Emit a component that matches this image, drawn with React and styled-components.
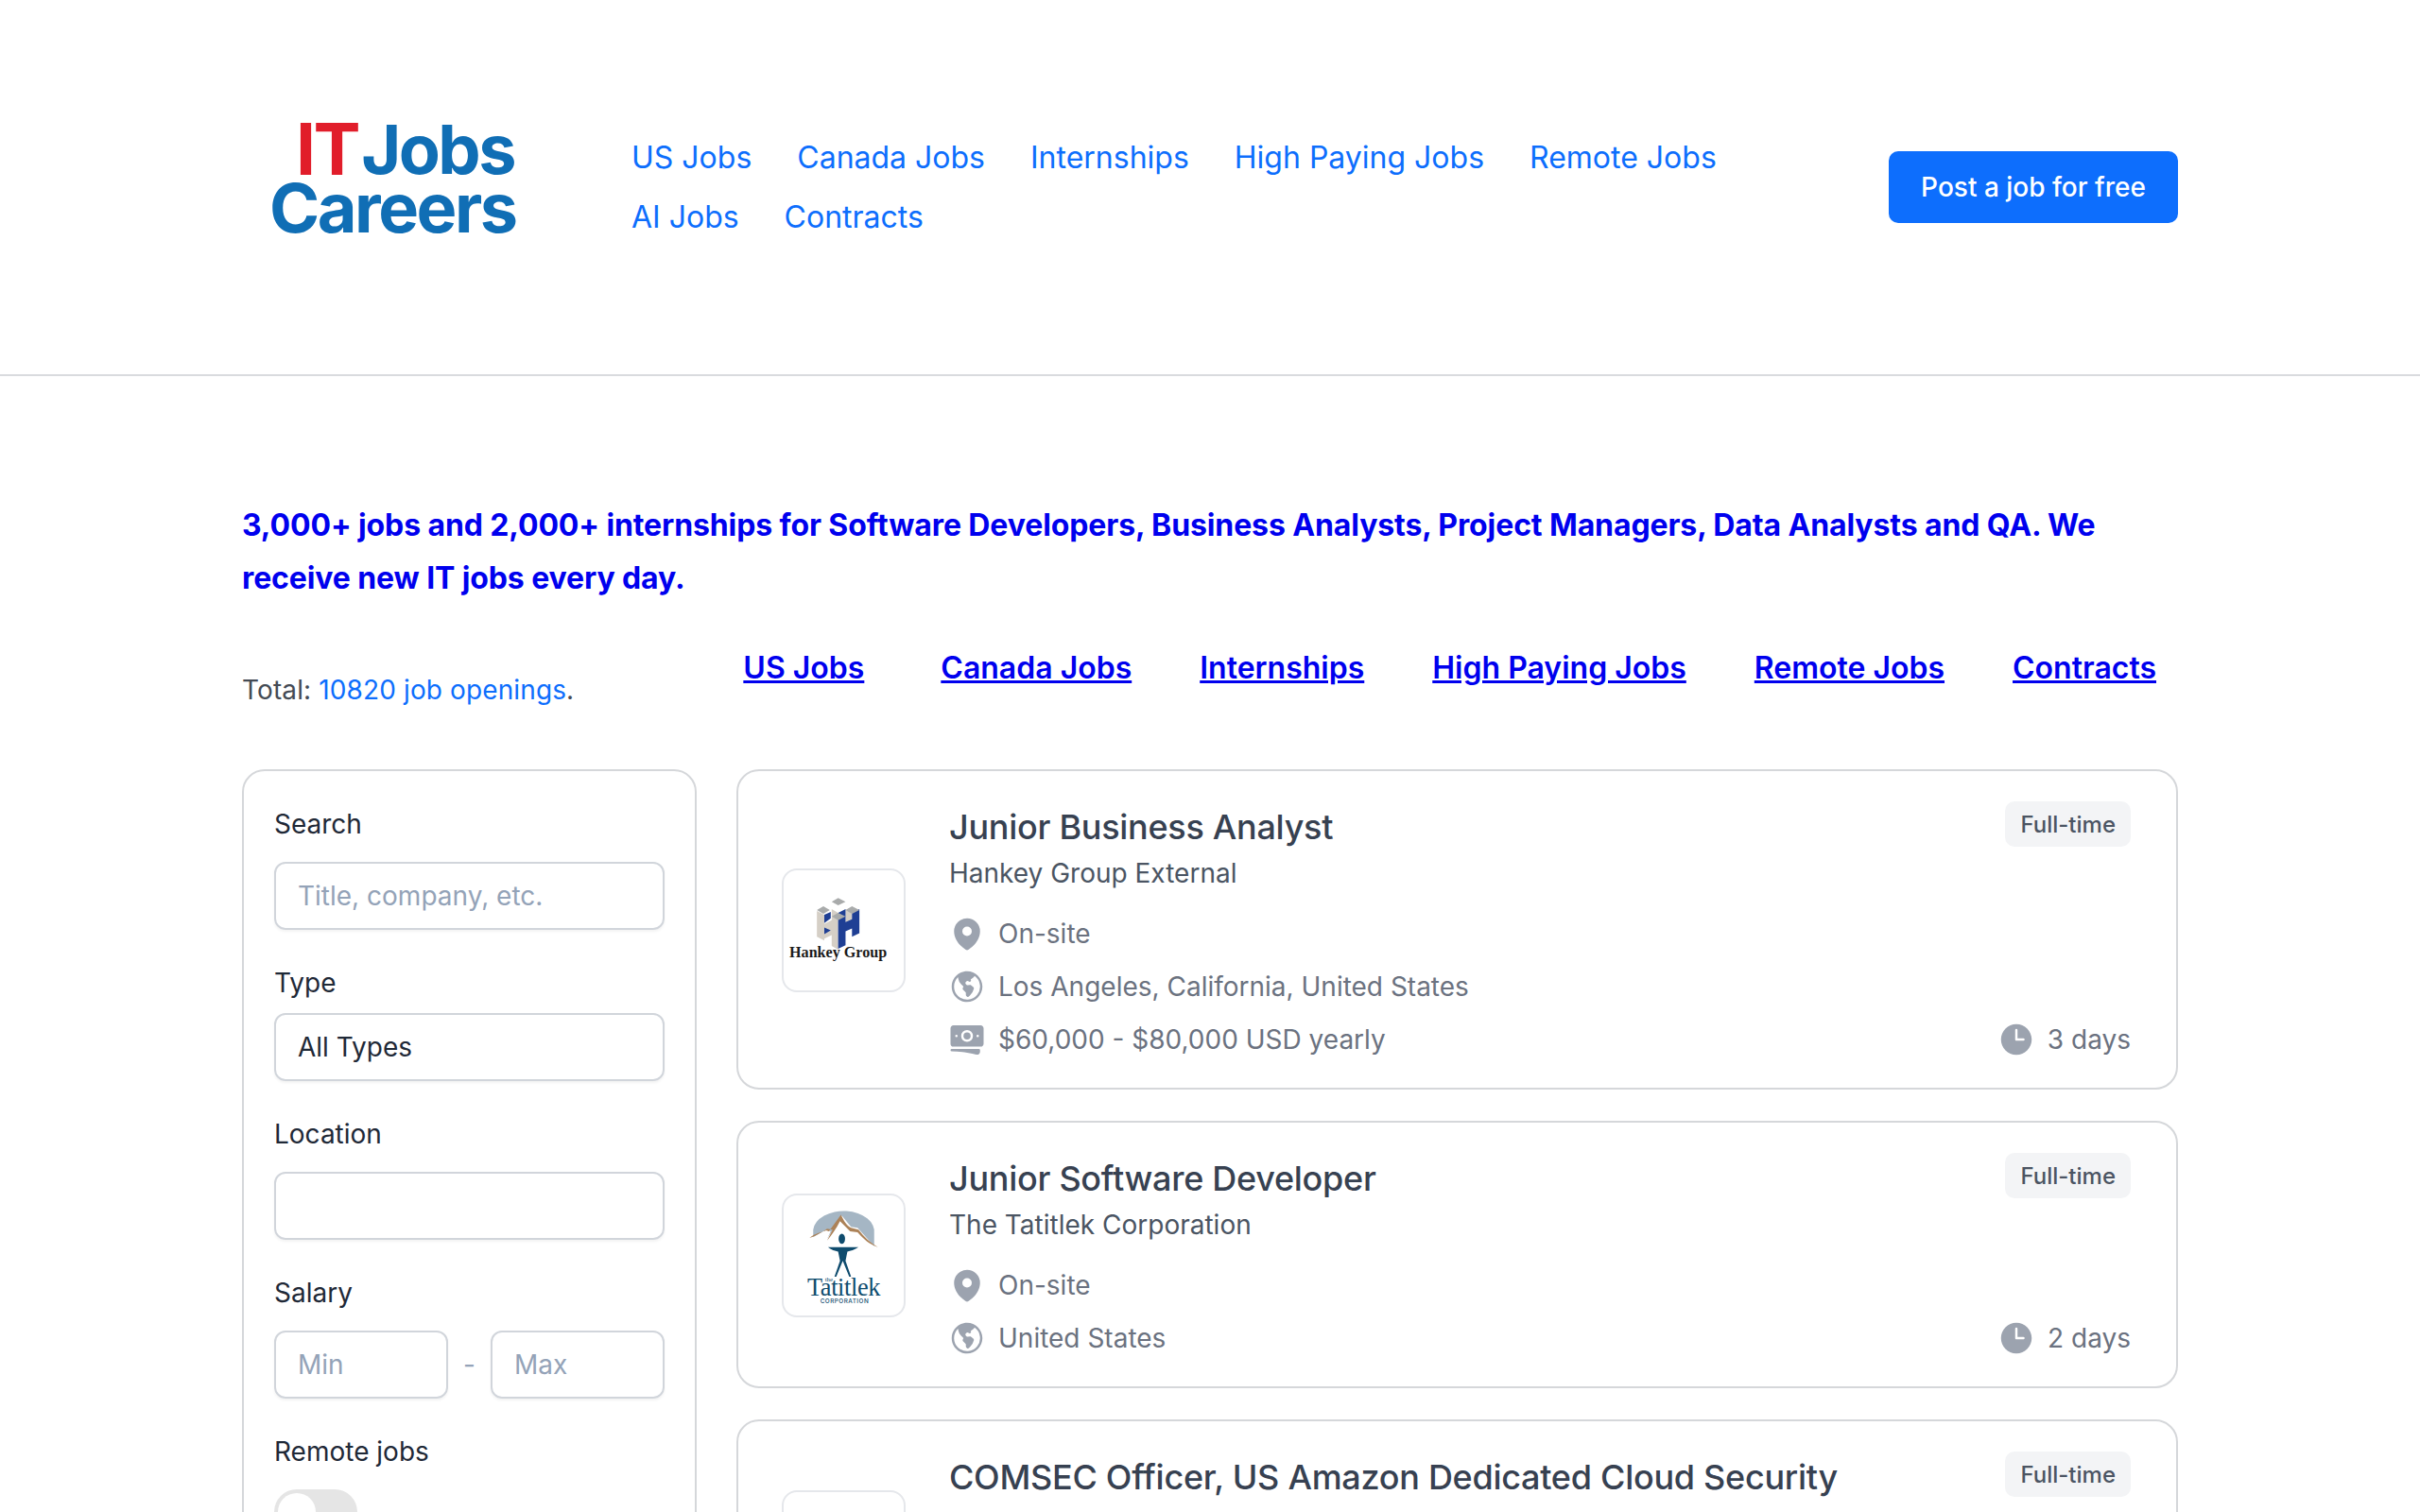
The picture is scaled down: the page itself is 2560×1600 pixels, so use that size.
import React from "react";
import styled, { createGlobalStyle } from "styled-components";

const Global = createGlobalStyle`
  html, body { margin: 0; padding: 0; background: #fff; height: 1600px; overflow: hidden; }
  * { box-sizing: border-box; }
  body { font-family: Inter, "Liberation Sans", sans-serif; color: #111827; }
`;
const Header = styled.header`
  height: 398px; border-bottom: 2px solid #d9dbde; padding: 0 256px;
  display: flex; align-items: center;
`;
const LogoBox = styled.div`
  width: 412px; flex: none; padding: 0 0 19px 29px; font-weight: 700;
  letter-spacing: -2.5px; line-height: 62px; font-size: 72px; color: #106eb5;
`;
const LogoLine = styled.div`
  display: flex; padding-left: ${(p) => p.$indent || 0}px; gap: 3px;
`;
const LogoRed = styled.span` color: #e11d2a; font-size: 75px; `;
const Nav = styled.nav`
  flex: 1; display: flex; flex-wrap: wrap; column-gap: 48px; row-gap: 15px; max-width: 1300px;
`;
const NavLink = styled.a`
  color: #0d6efd; font-size: 32px; line-height: 48px; text-decoration: none;
`;
const PostButton = styled.a`
  flex: none; margin-left: auto; background: #0d6efd; color: #fff; font-size: 28px; font-weight: 500;
  height: 76px; width: 306px; border-radius: 10px; display: flex; align-items: center; justify-content: center;
`;
const Main = styled.main` padding: 0 256px; `;
const Intro = styled.p`
  margin: 130px 0 0; color: #0000ee; font-weight: 700; font-size: 32px; line-height: 56px; letter-spacing: -0.11px;
`;
const Summary = styled.div`
  display: flex; justify-content: space-between; margin-top: 40px; height: 134px;
`;
const Total = styled.div` font-size: 28px; line-height: 42px; color: #444b55; padding-top: 29px; letter-spacing: .12px; `;
const TotalLink = styled.a` color: #0d6efd; `;
const QuickLinks = styled.div`
  display: flex; gap: 72px; padding: 3px 23px 0 0; white-space: nowrap; align-items: flex-start;
`;
const QuickLink = styled.a`
  color: #0000ee; font-weight: 600; font-size: 32px; line-height: 48px; text-decoration: underline;
  margin-right: ${(p) => (p.$wide ? 9 : 0)}px;
`;
const Columns = styled.div` display: flex; gap: 42px; align-items: flex-start; `;
const Sidebar = styled.aside`
  width: 481px; flex: none; border: 2px solid #d5d7da; border-radius: 24px; padding: 36px 32px; height: 1000px;
`;
const Label = styled.div` font-size: 28px; line-height: 40px; color: #1f2937; margin-top: ${(p) => p.$top || 0}px; `;
const Field = styled.div`
  height: 72px; border: 2px solid #d1d5db; border-radius: 12px; margin-top: ${(p) => p.$gap || 21}px; padding: 0 23px;
  display: flex; align-items: center; font-size: 28px; color: ${(p) => (p.$value ? "#1f2937" : "#94a3b8")};
  box-shadow: 0 2px 3px rgba(0,0,0,.05); flex: ${(p) => (p.$half ? "1" : "none")};
`;
const Range = styled.div` display: flex; align-items: center; gap: 16px; `;
const Dash = styled.span` color: #94a3b8; font-size: 28px; margin-top: 20px; `;
const Toggle = styled.div`
  width: 88px; height: 48px; border-radius: 24px; background: #e5e5e5; margin-top: 20px; padding: 4px;
`;
const Knob = styled.div` width: 40px; height: 40px; border-radius: 50%; background: #fff; `;
const Results = styled.div` flex: 1; display: flex; flex-direction: column; gap: 33px; `;
const Card = styled.article`
  border: 2px solid #d5d7da; border-radius: 24px; display: flex; padding: 32px 48px 30px 46px;
`;
const LogoTile = styled.div`
  width: 131px; height: 131px; flex: none; align-self: ${(p) => (p.$top ? "flex-start" : "center")};
  margin-top: ${(p) => p.$mt || 0}px; border: 2px solid #e5e7eb; border-radius: 16px; overflow: hidden; background: #fff;
`;
const Body = styled.div` flex: 1; margin-left: 46px; min-width: 0; display: flex; flex-direction: column; `;
const TitleRow = styled.div` display: flex; justify-content: space-between; align-items: flex-start; `;
const Title = styled.h2`
  margin: 3px 0 0; font-size: 36px; font-weight: 450; line-height: 48px; color: #374151; letter-spacing: -.28px;
`;
const Badge = styled.span`
  background: #f3f4f6; color: #4b5563; font-size: 24px; font-weight: 500; border-radius: 10px; height: 48px;
  padding: 0 16px; display: flex; align-items: center;
`;
const Company = styled.div` font-size: 28px; line-height: 42px; color: #4b5563; margin-top: 4px; `;
const Meta = styled.div` display: flex; flex-direction: column; gap: 14px; margin-top: 22px; `;
const MetaRow = styled.div` display: flex; align-items: center; justify-content: space-between; height: 42px; `;
const MetaItem = styled.div` display: flex; align-items: center; gap: 16px; font-size: 28px; color: #6b7280; `;
const IconSvg = styled.svg` width: 40px; height: 40px; margin: -2px -3px -2px -1px; color: #9ca3af; flex: none; `;

const Icon = ({ children }) => <IconSvg viewBox="0 0 24 24" fill="currentColor">{children}</IconSvg>;
const PinIcon = () => (
  <Icon><path fillRule="evenodd" clipRule="evenodd" d="M11.54 22.351l.07.04.028.016a.76.76 0 00.723 0l.028-.015.071-.041a16.975 16.975 0 001.144-.742 19.58 19.58 0 002.683-2.282c1.944-1.99 3.963-4.98 3.963-8.827a8.25 8.25 0 00-16.5 0c0 3.846 2.02 6.837 3.963 8.827a19.58 19.58 0 002.682 2.282 16.975 16.975 0 001.145.742zM12 13.5a3 3 0 100-6 3 3 0 000 6z"/></Icon>
);
const GlobeIcon = () => (
  <Icon><path fillRule="evenodd" clipRule="evenodd" d="M12 2.25c-5.385 0-9.75 4.365-9.75 9.75s4.365 9.75 9.75 9.75 9.75-4.365 9.75-9.75S17.385 2.25 12 2.25zM6.262 6.072a8.25 8.25 0 1010.562-.766 4.5 4.5 0 01-1.318 1.357L14.25 7.5l.165.33a.809.809 0 01-1.086 1.085l-.604-.302a1.125 1.125 0 00-1.298.21l-.132.131c-.439.44-.439 1.152 0 1.591l.296.296c.256.257.622.374.98.314l1.17-.195c.323-.054.654.036.905.245l1.33 1.108c.32.267.46.694.358 1.1a8.7 8.7 0 01-2.288 4.04l-.723.724a1.125 1.125 0 01-1.298.21l-.153-.076a1.125 1.125 0 01-.622-1.006v-1.089c0-.298-.119-.585-.33-.796l-1.347-1.347a1.125 1.125 0 01-.21-1.298L9.75 12l-1.64-1.64a6 6 0 01-1.676-3.257l-.172-1.03z"/></Icon>
);
const CashIcon = () => (
  <Icon>
    <path d="M12 7.5a2.25 2.25 0 100 4.5 2.25 2.25 0 000-4.5z"/>
    <path fillRule="evenodd" clipRule="evenodd" d="M1.5 4.875C1.5 3.839 2.34 3 3.375 3h17.25c1.035 0 1.875.84 1.875 1.875v9.75c0 1.036-.84 1.875-1.875 1.875H3.375A1.875 1.875 0 011.5 14.625v-9.75zM8.25 9.75a3.75 3.75 0 117.5 0 3.75 3.75 0 01-7.5 0zM18.75 9a.75.75 0 00-.75.75v.008c0 .414.336.75.75.75h.008a.75.75 0 00.75-.75V9.75a.75.75 0 00-.75-.75h-.008zM4.5 9.75A.75.75 0 015.25 9h.008a.75.75 0 01.75.75v.008a.75.75 0 01-.75.75H5.25a.75.75 0 01-.75-.75V9.75z"/>
    <path d="M2.25 18a.75.75 0 000 1.5c5.4 0 10.63.722 15.6 2.075 1.19.324 2.4-.558 2.4-1.82V18.75a.75.75 0 00-.75-.75H2.25z"/>
  </Icon>
);
const ClockIcon = () => (
  <Icon><path fillRule="evenodd" clipRule="evenodd" d="M12 2.25c-5.385 0-9.75 4.365-9.75 9.75s4.365 9.75 9.75 9.75 9.75-4.365 9.75-9.75S17.385 2.25 12 2.25zM12.75 6a.75.75 0 00-1.5 0v6c0 .414.336.75.75.75h4.5a.75.75 0 000-1.5h-3.750V6z"/></Icon>
);
const HankeyLogo = () => (
  <svg viewBox="0 0 130 130" width="127" height="127">
    <path fill="#d5cfc6" d="M36 44l8 4v10l8-4v-12l7 4v40l-7-4V70l-8 4v2l-8-4Z"/>
    <path fill="#d5cfc6" d="M67 42l7 4v8l-7 3Z"/>
    <path fill="#1f3f94" d="M59 46l8-4v14l7-3v-7l8-4v26l-8 4v-9l-7 3v15l-8 4Z"/>
    <path fill="#1f3f94" d="M44 48l7-3v7l-7 5ZM44 62l7 3-7 4Z"/>
    <path fill="#a9abab" d="M36 43l7-4 7 4-7 4ZM52 34l7-4 8 4-8 4ZM67 43l7-4 8 4-8 4ZM52 50l7-4 8 4-8 4Z"/>
    <text x="59" y="94" textAnchor="middle" fontFamily="'Liberation Serif', serif" fontWeight="700" fontSize="16.5" fill="#1a1a1a">Hankey Group</text>
  </svg>
);
const TatitlekLogo = () => (
  <svg viewBox="0 0 130 130" width="127" height="127">
    <path fill="#a5b6c4" d="M32 37a33 22 0 0 1 66 4v14L80 35l-7-1-10-12-16 25 4-8-5-2-14 8Z"/>
    <path fill="#ac8258" d="M28 46c6-5 14-6 18-8l3 1 13-18c3 6 6 12 11 14l8 2c6 8 13 14 21 19-9-3-15-8-22-16l-8-1-11-11c-4 8-9 15-14 21l6-12-6-1c-6 4-12 8-19 10Z"/>
    <ellipse cx="63" cy="47" rx="3.500" ry="5.500" fill="#0f4c6e"/>
    <path fill="#0f4c6e" d="M48 56h33c-4 3-9 4-12 5l-2 10 6 17h-2l-7-17-7 17h-2l6-17-2-10c-3-1-8-2-11-5Z"/>
    <text x="65" y="109" textAnchor="middle" fontFamily="'Liberation Serif', serif" fontSize="27" fill="#0f4c6e" letterSpacing="-.4">Tatitlek</text>
    <text x="49" y="93" textAnchor="middle" fontFamily="'Liberation Serif', serif" fontSize="7" fill="#0f4c6e">the</text>
    <text x="66" y="117" textAnchor="middle" fontFamily="Inter, sans-serif" fontSize="6.500" fontWeight="500" fill="#0f4c6e" letterSpacing=".5">CORPORATION</text>
  </svg>
);

const nav = ["US Jobs", "Canada Jobs", "Internships", "High Paying Jobs", "Remote Jobs", "AI Jobs", "Contracts"];
const quick = ["US Jobs", "Canada Jobs", "Internships", "High Paying Jobs", "Remote Jobs", "Contracts"];

export default function App() {
  return (
    <>
      <Global />
      <Header>
        <LogoBox>
          <LogoLine $indent={28}><LogoRed>IT</LogoRed><span>Jobs</span></LogoLine>
          <LogoLine>Careers</LogoLine>
        </LogoBox>
        <Nav>{nav.map((n) => <NavLink key={n}>{n}</NavLink>)}</Nav>
        <PostButton>Post a job for free</PostButton>
      </Header>
      <Main>
        <Intro>3,000+ jobs and 2,000+ internships for Software Developers, Business Analysts, Project Managers, Data Analysts and QA. We receive new IT jobs every day.</Intro>
        <Summary>
          <Total>Total: <TotalLink>10820 job openings</TotalLink>.</Total>
          <QuickLinks>{quick.map((q, i) => <QuickLink key={q} href="#" $wide={i === 0}>{q}</QuickLink>)}</QuickLinks>
        </Summary>
        <Columns>
          <Sidebar>
            <Label>Search</Label>
            <Field $gap={20}>Title, company, etc.</Field>
            <Label $top={36}>Type</Label>
            <Field $value $gap={12}>All Types</Field>
            <Label $top={36}>Location</Label>
            <Field $gap={20} />
            <Label $top={36}>Salary</Label>
            <Range><Field $half $gap={20}>Min</Field><Dash>-</Dash><Field $half $gap={20}>Max</Field></Range>
            <Label $top={36}>Remote jobs</Label>
            <Toggle><Knob /></Toggle>
          </Sidebar>
          <Results>
            <Card>
              <LogoTile><HankeyLogo /></LogoTile>
              <Body>
                <TitleRow><Title>Junior Business Analyst</Title><Badge>Full-time</Badge></TitleRow>
                <Company>Hankey Group External</Company>
                <Meta>
                  <MetaRow><MetaItem><PinIcon />On-site</MetaItem></MetaRow>
                  <MetaRow><MetaItem><GlobeIcon />Los Angeles, California, United States</MetaItem></MetaRow>
                  <MetaRow><MetaItem><CashIcon />$60,000 - $80,000 USD yearly</MetaItem><MetaItem><ClockIcon />3 days</MetaItem></MetaRow>
                </Meta>
              </Body>
            </Card>
            <Card>
              <LogoTile><TatitlekLogo /></LogoTile>
              <Body>
                <TitleRow><Title>Junior Software Developer</Title><Badge>Full-time</Badge></TitleRow>
                <Company>The Tatitlek Corporation</Company>
                <Meta>
                  <MetaRow><MetaItem><PinIcon />On-site</MetaItem></MetaRow>
                  <MetaRow><MetaItem><GlobeIcon />United States</MetaItem><MetaItem><ClockIcon />2 days</MetaItem></MetaRow>
                </Meta>
              </Body>
            </Card>
            <Card>
              <LogoTile $top $mt={41} />
              <Body>
                <TitleRow><Title>COMSEC Officer, US Amazon Dedicated Cloud Security</Title><Badge>Full-time</Badge></TitleRow>
              </Body>
            </Card>
          </Results>
        </Columns>
      </Main>
    </>
  );
}
